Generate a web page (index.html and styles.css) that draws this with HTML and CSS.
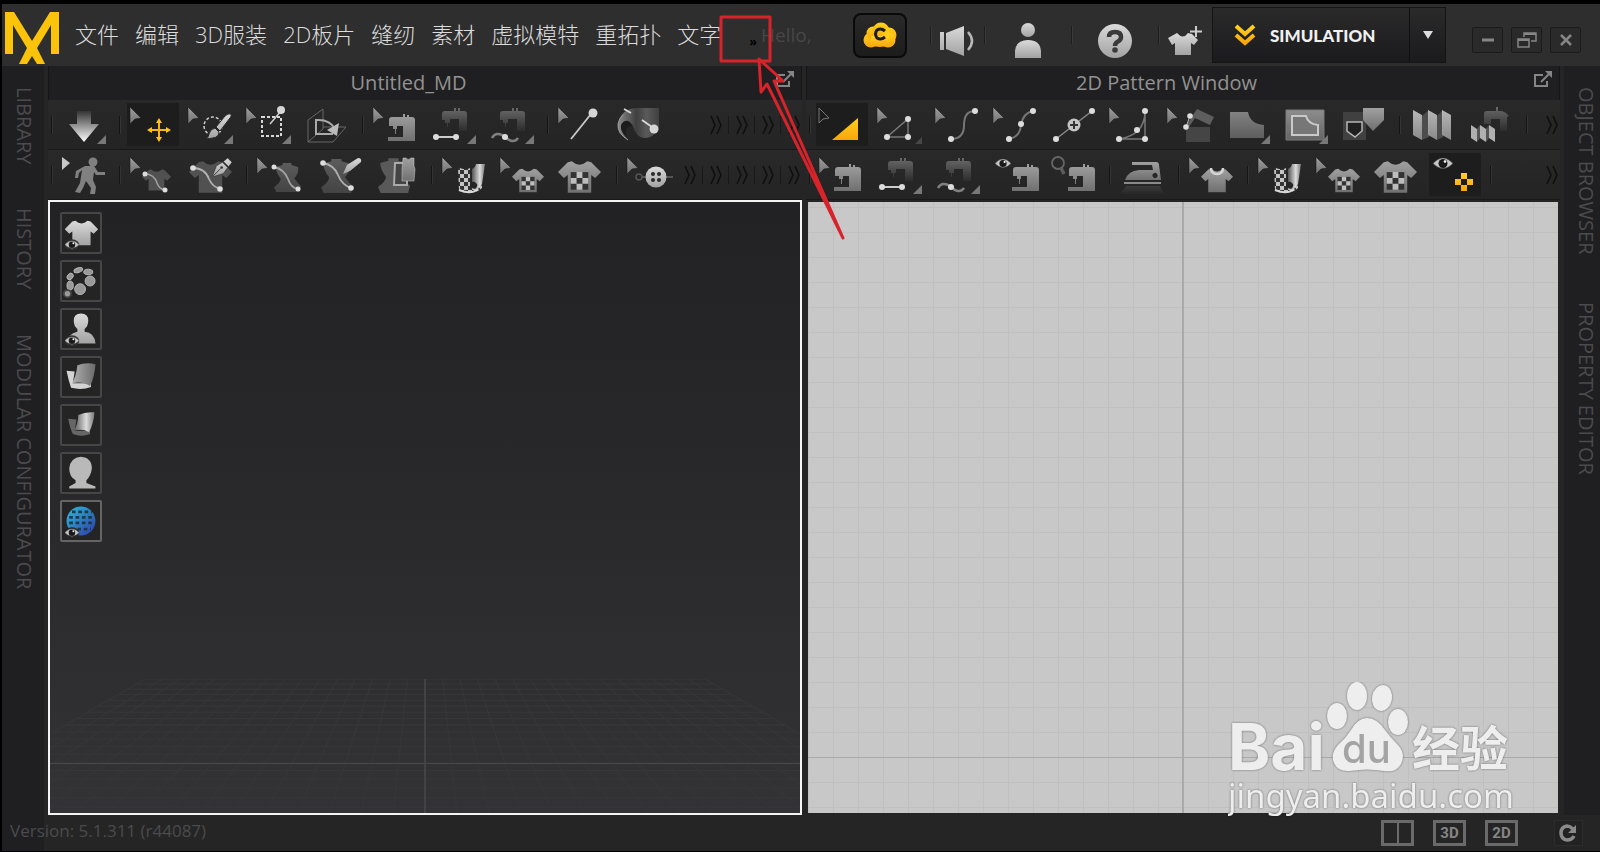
FILE: index.html
```html
<!DOCTYPE html>
<html lang="zh-CN">
<head>
  <meta charset="UTF-8" />
  <meta name="viewport" content="width=device-width, initial-scale=1" />
  <title>Untitled_MD</title>
  <link rel="stylesheet" href="styles.css">
</head>
<body>

<!-- shared icon shapes -->
<svg class="defs" aria-hidden="true">
  <defs>
    <linearGradient id="g-light" x1="0" y1="0" x2="0" y2="1"><stop offset="0" stop-color="#dadada"/><stop offset="1" stop-color="#a2a2a2"/></linearGradient>
    <linearGradient id="g-mid" x1="0" y1="0" x2="0" y2="1"><stop offset="0" stop-color="#a0a0a0"/><stop offset="1" stop-color="#707070"/></linearGradient>
    <linearGradient id="g-dark" x1="0" y1="0" x2="0" y2="1"><stop offset="0" stop-color="#5c5c5c"/><stop offset="1" stop-color="#424242"/></linearGradient>
    <linearGradient id="g-fade" x1="0" y1="0" x2="0" y2="1"><stop offset="0" stop-color="#6a6a6a"/><stop offset="1" stop-color="#2c2c2c"/></linearGradient>
    <linearGradient id="g-down" x1="0" y1="0" x2="0" y2="1"><stop offset="0" stop-color="#333"/><stop offset="1" stop-color="#fff"/></linearGradient>
    <linearGradient id="g-gold" x1="0" y1="0" x2="0" y2="1"><stop offset="0" stop-color="#ffd21c"/><stop offset="1" stop-color="#f9a50d"/></linearGradient>
    <linearGradient id="g-side" x1="0" y1="0" x2="1" y2="0"><stop offset="0" stop-color="#b0b0b0"/><stop offset="1" stop-color="#6a6a6a"/></linearGradient>
    <linearGradient id="g-fold" x1="0" y1="0" x2="1" y2="0"><stop offset="0" stop-color="#8c8c8c"/><stop offset=".45" stop-color="#3f3f3f"/><stop offset=".7" stop-color="#5a5a5a"/><stop offset="1" stop-color="#404040"/></linearGradient>
    <linearGradient id="g-roll" x1="0" y1="0" x2="1" y2="0"><stop offset="0" stop-color="#555"/><stop offset=".6" stop-color="#ddd"/><stop offset="1" stop-color="#777"/></linearGradient>
    <linearGradient id="g-globe" x1="0" y1="0" x2="1" y2="1"><stop offset="0" stop-color="#2bc0dc"/><stop offset="1" stop-color="#3038a8"/></linearGradient>
    <pattern id="checks" width="8" height="8" patternUnits="userSpaceOnUse"><path fill="#333" d="M0 0h8v8H0z"/><path fill="#c4c4c4" d="M0 0h4v4H0zM4 4h4v4H4z"/></pattern>
  </defs>
  <symbol id="cursor" viewBox="0 0 58 50"><path fill="url(#g-mid)" stroke="#171717" stroke-width=".5" d="M6 7l11 11-6 1-5 5z"/></symbol>
  <symbol id="corner" viewBox="0 0 58 50"><path fill="#787878" d="M51 35v9h-9z"/></symbol>
  <symbol id="machine" viewBox="0 0 27 27"><path d="M1 6q0-3 3-3h11V0h2v3h2V1h2v2h3q3 0 3 3v21H0v-4h15V12H9v3H8v5H7v-5H5v-3H1z"/></symbol>
  <symbol id="tee" viewBox="0 0 44 32"><path d="M14 0q8 7 16 0l4 1 10 10-6 6-4-3v18H10V14l-4 3-6-6L10 1z"/></symbol>
  <symbol id="dress" viewBox="0 0 28 30"><path d="M2 4l7-2V0h9v2l7 2q1 7-4 12 3 4 7 8l-2 8H3l-3-7q7-5 7-9Q2 10 2 4z"/></symbol>
  <symbol id="checktee" viewBox="0 0 44 32"><path fill="url(#g-mid)" d="M14 0q8 7 16 0l4 1 10 10-6 6-4-3v18H10V14l-4 3-6-6L10 1z"/><path fill="#333" d="M13 11h18v18H13z"/><path fill="#bdbdbd" d="M19 11h6v6h-6zM13 17h6v6h-6zM25 17h6v6h-6zM19 23h6v6h-6z"/></symbol>
  <symbol id="roll" viewBox="0 0 58 50"><path fill="url(#checks)" d="M22 17q7 4 12 1v19q8 5 12-3v4q-8 8-23 2z"/><path fill="url(#g-roll)" d="M36 32V19q3-1 4-5h9l-3 20q-2 6-7 5 4-4 1-6-2-2-4-1z"/><path fill="none" stroke="#d8d8d8" stroke-width="2" d="M23 40q12 5 19-1"/></symbol>
  <symbol id="eye" viewBox="0 0 20 12"><path fill="#c8c8c8" stroke="#333" stroke-width=".5" d="M0 6q10-11 20 0-10 10-20 0z"/><circle cx="10" cy="6" r="4.500" fill="#1a1a1a"/><circle cx="12" cy="4" r="1.300" fill="#fff"/></symbol>
  <symbol id="pen" viewBox="0 0 24 22"><path fill="url(#g-light)" stroke="#222" stroke-width=".6" d="M23 5l-5-5-5 4 6 6zM12 5l6 6-5 7-13 4 5-13z"/><path stroke="#333" d="M1 21l9-9"/><circle cx="11" cy="11" r="1.500" fill="#333"/></symbol>
  <symbol id="chev" viewBox="0 0 12 22"><path fill="none" stroke="#0f0f0f" stroke-width="1.600" d="M1 2l4 9-4 9M7 2l4 9-4 9"/></symbol>
  <symbol id="popout" viewBox="0 0 20 17"><path fill="none" stroke="#858585" stroke-width="2" d="M10 4H2v11h12v-5M8 11l8-8"/><path fill="#858585" d="M12 0h7v7z"/></symbol>
  <symbol id="segment" viewBox="0 0 58 50"><path fill="url(#g-fade)" d="M17 14q0-3 3-3h9V8h2v3h2V8h2v3h4q3 0 3 3v17h-8V19h-9v4h-2v4h-1v-4h-2v-3h-3z"/></symbol>
</svg>

<header class="topbar">
  <a href="#" class="logo" aria-label="Home">
    <svg width="56" height="54" viewBox="0 0 56 54"><path fill="#fcc30b" d="M0 43V1h9l18 29L45 1h9v42h-8V14L32 37l8 16h-8l-5-8-5 8h-8l8-16L8 14v29z"/></svg>
  </a>
  <nav class="menu">
    <a href="#">文件</a>
    <a href="#">编辑</a>
    <a href="#">3D服装</a>
    <a href="#">2D板片</a>
    <a href="#">缝纫</a>
    <a href="#">素材</a>
    <a href="#">虚拟模特</a>
    <a href="#">重拓扑</a>
    <a href="#">文字</a>
  </nav>
  <button class="more" aria-label="More menus">»</button>
  <span class="hello">Hello,</span>

  <div class="account">
    <button class="cloud" aria-label="Cloud">
      <svg width="34" height="26" viewBox="0 0 34 26"><g fill="url(#g-gold)"><circle cx="8" cy="18" r="7.500"/><circle cx="10" cy="11" r="6.500"/><circle cx="18" cy="9" r="8.500"/><circle cx="26" cy="13" r="7.500"/><circle cx="25" cy="18" r="7.500"/><path d="M8 14h18v9q-9 4-18 0z"/></g><path fill="none" stroke="#1d1d1d" stroke-width="3" d="M22 9q-4-3.500-8-1-3 4 0 8 4 2.500 8-1"/></svg>
    </button>
    <button class="acct narrow" aria-label="News">
      <svg width="36" height="32" viewBox="0 0 36 32"><path fill="url(#g-light)" d="M1 7h4v18H1zM7 8L25 1v30L7 24z"/><path fill="none" stroke="#b8b8b8" stroke-width="2.500" d="M29 7q8 9 0 18"/></svg>
    </button>
    <button class="acct" aria-label="User">
      <svg width="28" height="36" viewBox="0 0 28 36"><circle cx="14" cy="7" r="7" fill="url(#g-light)"/><path fill="url(#g-light)" d="M1 35V28q1-11 13-11t13 11v7z"/></svg>
    </button>
    <button class="acct" aria-label="Help">
      <svg width="34" height="34" viewBox="0 0 34 34"><circle cx="17" cy="17" r="17" fill="url(#g-light)"/><path fill="none" stroke="#3a3a3a" stroke-width="4.500" d="M11 13q0-5 6-5t6 5q0 3-3 4.500-3 1.500-3 4.500"/><circle cx="17" cy="26" r="2.800" fill="#3a3a3a"/></svg>
    </button>
    <button class="acct narrow" aria-label="Add garment">
      <svg width="34" height="32" viewBox="0 0 34 32"><path fill="url(#g-light)" d="M9 8q6 7 11 0l4 1 6 6-4 5-3-2v12H7V18l-3 2-4-7z"/><path stroke="#ccc" stroke-width="2" d="M28 1v11M22 6.500h12"/></svg>
    </button>
  </div>

  <div class="mode">
    <button class="mode-main">
      <svg width="22" height="22" viewBox="0 0 22 22"><path fill="none" stroke="url(#g-gold)" stroke-width="4" d="M2 2l9 8 9-8M2 11l9 8 9-8"/></svg>
      SIMULATION
    </button>
    <button class="mode-drop" aria-label="Choose mode">
      <svg width="10" height="8" viewBox="0 0 10 8"><path fill="#ddd" d="M0 0h10L5 8z"/></svg>
    </button>
  </div>

  <div class="winctl">
    <button aria-label="Minimize"><svg width="14" height="14" viewBox="0 0 14 14"><path stroke="#868686" stroke-width="3" d="M1 7h12"/></svg></button>
    <button aria-label="Restore"><svg width="20" height="16" viewBox="0 0 20 16"><path fill="none" stroke="#868686" stroke-width="1.500" d="M1 7h11v8H1zM7 5V1h12v8h-5"/><path stroke="#868686" stroke-width="2" d="M1 8h11M7 2h12"/></svg></button>
    <button aria-label="Close"><svg width="12" height="12" viewBox="0 0 12 12"><path stroke="#868686" stroke-width="2.500" d="M1 1l10 10M11 1L1 11"/></svg></button>
  </div>
</header>

<main class="workspace">
  <aside class="side left">
    <button>LIBRARY</button>
    <button>HISTORY</button>
    <button>MODULAR CONFIGURATOR</button>
  </aside>

  <section class="panel">
    <div class="panel-title">
      <h2>Untitled_MD</h2>
      <button aria-label="Undock 3D window"><svg width="20" height="17"><use href="#popout"/></svg></button>
    </div>

    <div class="toolbar">
      <i class="grip"></i>
      <button class="tool" aria-label="Simulate"><svg viewBox="0 0 58 50"><path fill="url(#g-down)" d="M22 11h14v13h8L29 42 14 24h8z"/><use href="#corner"/></svg></button>
      <i class="sep"></i>
      <button class="tool on" aria-label="Select/Move"><svg viewBox="0 0 58 50"><use href="#cursor"/><path stroke="#fbb50e" stroke-width="2" d="M35 20v20M25 30h20"/><path fill="#ffc51a" d="M35 18l3 5h-6zM35 42l3-5h-6zM23 30l5-3v6zM47 30l-5-3v6z"/></svg></button>
      <button class="tool" aria-label="Select brush"><svg viewBox="0 0 58 50"><use href="#cursor"/><circle cx="31" cy="26" r="9" fill="none" stroke="#ccc" stroke-width="1.500" stroke-dasharray="3 2"/><path fill="url(#g-light)" stroke="#262626" d="M49 14q-3-1-6 2l-9 11 4 4 10-13q2-2 1-4zM33 28l4 4q0 5-6 6-4 1-7 0 3-1 3-4 1-5 6-6z"/><use href="#corner"/></svg></button>
      <button class="tool" aria-label="Box select"><svg viewBox="0 0 58 50"><use href="#cursor"/><path fill="none" stroke="#d8d8d8" stroke-width="2" stroke-dasharray="3 2" d="M22 17h19v19H22z"/><path stroke="#ccc" stroke-width="1.500" d="M30 24l11-13"/><circle cx="41" cy="10" r="4" fill="#d6d6d6"/><use href="#corner"/></svg></button>
      <button class="tool" aria-label="Rotate view"><svg viewBox="0 0 58 50"><path fill="none" stroke="#666" d="M10 42V20L25 9v20L10 42h25l13-15H25"/><path fill="none" stroke="#aaa" stroke-width="2" d="M18 19v15h17M18 20q14-1 19 9"/><path fill="#bbb" d="M41 23l-2 13-10-6z"/></svg></button>
      <i class="sep"></i>
      <button class="tool" aria-label="Edit sewing"><svg viewBox="0 0 58 50"><use href="#cursor"/><use href="#machine" x="21" y="14" width="27" height="27" fill="url(#g-mid)"/></svg></button>
      <button class="tool" aria-label="Segment sewing"><svg viewBox="0 0 58 50"><use href="#segment"/><path stroke="#ccc" stroke-width="2" d="M11 37h20"/><circle cx="11" cy="37" r="3" fill="#ddd"/><circle cx="31" cy="37" r="3" fill="#ddd"/><use href="#corner"/></svg></button>
      <button class="tool" aria-label="Free sewing"><svg viewBox="0 0 58 50"><use href="#segment"/><path fill="none" stroke="#808080" stroke-width="2.500" d="M9 38q4-7 12-2 9 9 14 2"/><circle cx="22" cy="37" r="3" fill="#ddd"/><use href="#corner"/></svg></button>
      <i class="sep"></i>
      <button class="tool" aria-label="Pin"><svg viewBox="0 0 58 50"><use href="#cursor"/><path stroke="#ccc" stroke-width="1.800" d="M19 39l20-25"/><circle cx="41" cy="13" r="4.500" fill="#d6d6d6"/></svg></button>
      <button class="tool" aria-label="Pin fold"><svg viewBox="0 0 58 50"><path fill="url(#g-fold)" d="M18 40Q6 33 8 24q3-15 18-16h23v20q-5 10-15 10-8-1-11-12-3-6-9-4-4 8 4 18z"/><path fill="#1c1c1c" d="M22 26q-2-6-7-5-5 2-4 8 2 6 6 9-3-7 0-10 2-2 5-2z"/><path fill="none" stroke="#999" d="M18 40Q7 33 8 24q1-6 5-9"/><path stroke="#d8d8d8" stroke-width="1.800" d="M14 9l7 4M32 20l10 7"/><circle cx="44" cy="29" r="4.500" fill="#d6d6d6"/></svg></button>
      <div class="overflow">
        <button aria-label="More tools"><svg><use href="#chev"/></svg></button>
        <button aria-label="More tools"><svg><use href="#chev"/></svg></button>
        <button aria-label="More tools"><svg><use href="#chev"/></svg></button>
        <button aria-label="More tools"><svg><use href="#chev"/></svg></button>
      </div>
    </div>

    <div class="toolbar">
      <i class="grip"></i>
      <button class="tool" aria-label="Play motion"><svg viewBox="0 0 58 50"><path fill="#c8c8c8" d="M7 7l8 6-8 7z"/><circle cx="38" cy="12" r="4.500" fill="#808080"/><path fill="#808080" d="M30 16h9l4 6 7 0v3h-9l-2-3-1 8 3 7-1 7h-5l1-6-5-7-3 7-3 5-5-1 5-9 2-13-3 3-1 5h-3l1-7z"/></svg></button>
      <i class="sep"></i>
      <button class="tool" aria-label="Edit 3D line"><svg viewBox="0 0 58 50"><use href="#tee" x="18" y="17" width="29" height="26" fill="#515151"/><use href="#cursor"/><path fill="none" stroke="#a2a2a2" stroke-width="1.500" d="M21 24q9 0 12 9 2 6 8 7"/><circle cx="21" cy="24" r="2.500" fill="#ddd"/><circle cx="41" cy="40" r="2.500" fill="#ddd"/></svg></button>
      <button class="tool" aria-label="Draw 3D line"><svg viewBox="0 0 58 50"><use href="#tee" x="7" y="11" width="43" height="32" fill="#515151"/><path fill="none" stroke="#b2b2b2" stroke-width="1.800" d="M11 18q12 0 16 11 4 9 11 9"/><circle cx="11" cy="18" r="2.800" fill="#ddd"/><circle cx="38" cy="39" r="2.800" fill="#ddd"/><use href="#pen" x="30" y="8" width="21" height="19"/></svg></button>
      <i class="sep"></i>
      <button class="tool" aria-label="Edit avatar line"><svg viewBox="0 0 58 50"><use href="#dress" x="23" y="13" width="27" height="29" fill="url(#g-dark)"/><use href="#cursor"/><path fill="none" stroke="#a2a2a2" stroke-width="1.800" d="M23 17q10 2 14 12 3 9 10 10"/><circle cx="23" cy="17" r="2.500" fill="#ddd"/><circle cx="47" cy="39" r="2.500" fill="#ddd"/></svg></button>
      <button class="tool" aria-label="Draw avatar line"><svg viewBox="0 0 58 50"><use href="#dress" x="12" y="9" width="32" height="34" fill="url(#g-dark)"/><path fill="none" stroke="#b2b2b2" stroke-width="1.800" d="M14 13q11 2 15 12 4 10 13 13"/><circle cx="14" cy="13" r="2.800" fill="#ddd"/><circle cx="42" cy="38" r="2.800" fill="#ddd"/><path fill="url(#g-light)" d="M34 24l4-9 11-7q4 0 3 4L41 21z"/></svg></button>
      <button class="tool" aria-label="Flatten"><svg viewBox="0 0 58 50"><use href="#dress" x="11" y="8" width="32" height="35" fill="#595959"/><path fill="#444" stroke="#aaa" stroke-width="2" d="M28 13h12v22H27z"/><path fill="url(#g-mid)" stroke="#ccc" stroke-width=".5" d="M36 8h3q2 3 5 0h3v8l1 3-1 12H35V19z"/></svg></button>
      <i class="sep"></i>
      <button class="tool" aria-label="Edit texture"><svg viewBox="0 0 58 50"><use href="#cursor"/><use href="#roll"/></svg></button>
      <button class="tool" aria-label="Edit print"><svg viewBox="0 0 58 50"><use href="#cursor"/><use href="#checktee" x="18" y="18" width="32" height="25"/></svg></button>
      <button class="tool" aria-label="Print"><svg viewBox="0 0 58 50"><use href="#checktee" x="6" y="11" width="43" height="32"/></svg></button>
      <i class="sep"></i>
      <button class="tool" aria-label="Button"><svg viewBox="0 0 58 50"><use href="#cursor"/><path stroke="#555" stroke-width="2" d="M20 27h32"/><circle cx="18" cy="27" r="3" fill="none" stroke="#555" stroke-width="1.500"/><circle cx="35" cy="27" r="10.500" fill="url(#g-light)"/><g fill="#2a2a2a"><circle cx="32" cy="24" r="2"/><circle cx="38" cy="24" r="2"/><circle cx="32" cy="30" r="2"/><circle cx="38" cy="30" r="2"/></g></svg></button>
      <div class="overflow">
        <button aria-label="More tools"><svg><use href="#chev"/></svg></button>
        <button aria-label="More tools"><svg><use href="#chev"/></svg></button>
        <button aria-label="More tools"><svg><use href="#chev"/></svg></button>
        <button aria-label="More tools"><svg><use href="#chev"/></svg></button>
        <button aria-label="More tools"><svg><use href="#chev"/></svg></button>
      </div>
    </div>

    <div class="view3d">
      <svg class="floor" viewBox="0 0 750 134" preserveAspectRatio="none" aria-hidden="true"><g id="floorLines"></g><path stroke="#424244" stroke-width="2" d="M375 0v134"/><path stroke="#48484a" d="M0 84.500h750"/></svg>
      <div class="display">
        <button aria-label="Show garment"><svg viewBox="0 0 42 42"><use href="#tee" x="3" y="5" width="37" height="32" fill="url(#g-light)"/><ellipse cx="11" cy="34" rx="8" ry="6" fill="#333"/><use href="#eye" x="3" y="29" width="16" height="10"/></svg></button>
        <button aria-label="Show trims"><svg viewBox="0 0 42 42"><g fill="#999" stroke="#bbb"><ellipse cx="18" cy="9" rx="5" ry="2.500" transform="rotate(-20 18 9)"/><ellipse cx="29" cy="11" rx="5" ry="3"/><ellipse cx="9" cy="16" rx="4" ry="3" transform="rotate(-50 9 16)"/><circle cx="31" cy="21" r="5.500"/><ellipse cx="9" cy="26" rx="3.500" ry="5"/><circle cx="20" cy="30" r="6"/></g><circle cx="6" cy="35" r="5" fill="#444"/><circle cx="6" cy="35" r="3" fill="#999"/></svg></button>
        <button aria-label="Show avatar"><svg viewBox="0 0 42 42"><path fill="url(#g-light)" d="M21 4q8 0 8 8 0 6-4 9v3q11 1 12 13H6q0-11 11-13v-3q-4-3-4-9 0-8 8-8z"/><ellipse cx="11" cy="34" rx="8" ry="6" fill="#333"/><use href="#eye" x="3" y="29" width="16" height="10"/></svg></button>
        <button aria-label="Surface front"><svg viewBox="0 0 42 42"><path fill="#d4d4d4" d="M5 14l9 1-2 13 20 0v4q-10 4-22 1-3-9-5-19z"/><path fill="url(#g-side)" d="M17 8q10-4 20-1-1 14-6 24-9-6-20-3 5-9 6-20z"/></svg></button>
        <button aria-label="Surface back"><svg viewBox="0 0 42 42"><path fill="#666" d="M7 14l9 1-2 12 17 1v3q-9 4-19 0-3-6-5-16z"/><path fill="url(#g-roll)" d="M18 10q8-4 18-3-1 12-6 22-7-4-17-2 5-7 5-17z"/></svg></button>
        <button aria-label="Avatar style"><svg viewBox="0 0 42 42"><path fill="#b9b9b9" d="M21 3q12 1 12 13-1 8-6 13v3l10 4v2H8v-2l7-4v-3Q8 25 8 16 9 4 21 3z"/></svg></button>
        <button class="lit" aria-label="Show environment"><svg viewBox="0 0 42 42"><circle cx="21" cy="21" r="16" fill="url(#g-globe)"/><path fill="none" stroke="#1e3848" stroke-width="3" stroke-dasharray="4 3" d="M11 11h22M8 17h27M8 23h27M10 30h22"/><ellipse cx="11" cy="34" rx="8" ry="6" fill="#282829"/><use href="#eye" x="3" y="29" width="16" height="10"/></svg></button>
      </div>
    </div>
  </section>

  <section class="panel">
    <div class="panel-title">
      <h2>2D Pattern Window</h2>
      <button aria-label="Undock 2D window"><svg width="20" height="17"><use href="#popout"/></svg></button>
    </div>

    <div class="toolbar">
      <i class="grip"></i>
      <button class="tool on" aria-label="Transform pattern"><svg viewBox="0 0 58 50"><path fill="none" stroke="#777" d="M6 8l10 10-6 1-4 4z"/><path fill="url(#g-gold)" d="M19 40l26-22v22z"/></svg></button>
      <button class="tool" aria-label="Edit pattern"><svg viewBox="0 0 58 50"><use href="#cursor"/><path fill="none" stroke="#777" stroke-width="1.500" d="M16 37h21V19z"/><g fill="#ddd"><circle cx="16" cy="37" r="3"/><circle cx="37" cy="37" r="3"/><circle cx="37" cy="19" r="3"/></g><path fill="#484848" d="M51 37v7h-7z"/></svg></button>
      <button class="tool" aria-label="Edit curve point"><svg viewBox="0 0 58 50"><use href="#cursor"/><path fill="none" stroke="#777" stroke-width="2" d="M22 39q13 0 13-14t11-14"/><g fill="#ddd"><circle cx="22" cy="39" r="3"/><circle cx="46" cy="11" r="3"/></g></svg></button>
      <button class="tool" aria-label="Edit curvature"><svg viewBox="0 0 58 50"><use href="#cursor"/><path fill="none" stroke="#777" stroke-width="2" d="M22 39q11-2 12-14 2-12 12-14"/><g fill="#ddd"><circle cx="22" cy="39" r="3"/><circle cx="34" cy="24" r="3"/><circle cx="46" cy="11" r="3"/></g></svg></button>
      <button class="tool" aria-label="Add point"><svg viewBox="0 0 58 50"><path stroke="#888" stroke-width="1.500" d="M11 39l36-28"/><g fill="#ddd"><circle cx="11" cy="39" r="3"/><circle cx="47" cy="11" r="3"/></g><circle cx="29" cy="25" r="6.500" fill="#c4c4c4"/><path stroke="#333" stroke-width="2" d="M29 21v8M25 25h8"/></svg></button>
      <button class="tool" aria-label="Edit notch"><svg viewBox="0 0 58 50"><use href="#cursor"/><path fill="none" stroke="#777" stroke-width="1.500" d="M42 11v28H16q26-4 26-28z"/><g fill="#ddd"><circle cx="42" cy="11" r="3"/><circle cx="16" cy="39" r="3"/><circle cx="42" cy="39" r="3"/><circle cx="34" cy="30" r="3"/></g></svg></button>
      <button class="tool" aria-label="Fold pattern"><svg viewBox="0 0 58 50"><use href="#cursor"/><path fill="#454545" d="M25 27h24v15H25z"/><path fill="#5e5e5e" d="M32 15l4-6 17 8-4 8-15-7-6 9-3-1z"/><path stroke="#bbb" d="M29 16l-4 11"/><circle cx="29" cy="16" r="2.800" fill="#ddd"/><circle cx="25" cy="27" r="2.800" fill="#ddd"/></svg></button>
      <button class="tool" aria-label="Polygon"><svg viewBox="0 0 58 50"><path fill="url(#g-mid)" opacity=".75" d="M11 12h18q2 12 16 13v13H11z"/><use href="#corner"/></svg></button>
      <button class="tool" aria-label="Internal polygon"><svg viewBox="0 0 58 50"><path fill="url(#g-mid)" opacity=".85" stroke="#888" d="M9 10h38v30H9z"/><path fill="#777" stroke="#c9c9c9" stroke-width="2" d="M15 16h14q2 8 12 9v10H15z"/><use href="#corner"/></svg></button>
      <button class="tool" aria-label="Trace"><svg viewBox="0 0 58 50"><path fill="#404040" d="M8 12h23v28H8z"/><path fill="#1f1f1f" stroke="#b5b5b5" stroke-width="1.500" d="M12 22h15v9l-7 6-8-6z"/><path fill="url(#g-mid)" d="M28 8h21v12L38 31 28 20z"/></svg></button>
      <i class="sep"></i>
      <button class="tool" aria-label="Pleats"><svg viewBox="0 0 58 50"><path fill="#4d4d4d" d="M18 16l7-6v27l-7 3zM33 16l6-6v27l-6 3z"/><path fill="url(#g-light)" opacity=".8" d="M9 10l9 5v25l-9-5zM24 10l9 5v25l-9-5zM38 10l9 5v25l-9-5z"/></svg></button>
      <button class="tool" aria-label="Pleat sewing"><svg viewBox="0 0 58 50"><path fill="url(#g-fade)" d="M22 14q0-3 3-3h9V7h2v4h4l4 2 3 3-2 1v14h-7V19h-9v5h-7z"/><path fill="#b0b0b0" d="M9 25l6 4v13l-6-4zM18 25l6 4v13l-6-4zM27 25l6 4v13l-6-4z"/><path fill="#555" d="M15 29l3-4v13l-3 4zM24 29l3-4v13l-3 4z"/></svg></button>
      <i class="sep"></i>
      <div class="overflow"><button aria-label="More tools"><svg><use href="#chev"/></svg></button></div>
    </div>

    <div class="toolbar">
      <i class="grip"></i>
      <button class="tool" aria-label="Edit sewing"><svg viewBox="0 0 58 50"><use href="#cursor"/><use href="#machine" x="21" y="14" width="27" height="27" fill="url(#g-mid)"/></svg></button>
      <button class="tool" aria-label="Segment sewing"><svg viewBox="0 0 58 50"><use href="#segment"/><path stroke="#ccc" stroke-width="2" d="M11 37h20"/><circle cx="11" cy="37" r="3" fill="#ddd"/><circle cx="31" cy="37" r="3" fill="#ddd"/><use href="#corner"/></svg></button>
      <button class="tool" aria-label="Free sewing"><svg viewBox="0 0 58 50"><use href="#segment"/><path fill="none" stroke="#808080" stroke-width="2.500" d="M9 38q4-7 12-2 9 9 14 2"/><circle cx="22" cy="37" r="3" fill="#ddd"/><use href="#corner"/></svg></button>
      <button class="tool" aria-label="Show sewing"><svg viewBox="0 0 58 50"><use href="#eye" x="8" y="8" width="16" height="11"/><use href="#machine" x="25" y="14" width="27" height="27" fill="url(#g-mid)"/></svg></button>
      <button class="tool" aria-label="Check sewing"><svg viewBox="0 0 58 50"><circle cx="13" cy="13" r="6" fill="none" stroke="#666" stroke-width="1.800"/><path stroke="#5c5c5c" stroke-width="3.500" d="M16 18l3 6"/><use href="#machine" x="23" y="14" width="27" height="27" fill="url(#g-mid)"/></svg></button>
      <i class="sep"></i>
      <button class="tool" aria-label="Steam"><svg viewBox="0 0 58 50"><path fill="url(#g-fade)" opacity=".3" d="M12 36h34l4 8H6z"/><path fill="url(#g-mid)" fill-rule="evenodd" d="M18 12h24q3 0 3 3l2 15H11q3-9 14-10h14l-1-5H18zM43 24a2 2 0 1 0-4 3 2 2 0 0 0 4-3z"/><path fill="#8a8a8a" d="M10 32h37v2H10z"/></svg></button>
      <i class="sep"></i>
      <button class="tool" aria-label="Collar"><svg viewBox="0 0 58 50"><use href="#cursor"/><use href="#tee" x="18" y="18" width="32" height="25" fill="url(#g-mid)"/><path fill="none" stroke="#d5d5d5" stroke-width="2.500" d="M28 18q0 6 6 6t6-6"/></svg></button>
      <i class="sep"></i>
      <button class="tool" aria-label="Edit texture"><svg viewBox="0 0 58 50"><use href="#cursor"/><use href="#roll"/></svg></button>
      <button class="tool" aria-label="Edit print"><svg viewBox="0 0 58 50"><use href="#cursor"/><use href="#checktee" x="18" y="18" width="32" height="25"/></svg></button>
      <button class="tool" aria-label="Print"><svg viewBox="0 0 58 50"><use href="#checktee" x="6" y="11" width="43" height="32"/></svg></button>
      <button class="tool on" aria-label="Show print"><svg viewBox="0 0 58 50"><use href="#eye" x="7" y="7" width="20" height="13"/><path fill="url(#g-gold)" d="M35 23h6v6h-6zM29 29h6v6h-6zM41 29h6v6h-6zM35 35h6v6h-6z"/></svg></button>
      <i class="sep"></i>
      <div class="overflow"><button aria-label="More tools"><svg><use href="#chev"/></svg></button></div>
    </div>

    <div class="view2d"></div>
  </section>

  <aside class="side right">
    <button>OBJECT BROWSER</button>
    <button>PROPERTY EDITOR</button>
  </aside>
</main>

<footer class="status">
  <span>Version: 5.1.311 (r44087)</span>
  <div class="layout">
    <button class="split" aria-label="Split view"><i></i></button>
    <button>3D</button>
    <button>2D</button>
    <button class="reset" aria-label="Reset layout"><svg width="18" height="18" viewBox="0 0 18 18"><path fill="none" stroke="#8a8a8a" stroke-width="3.500" d="M14 5q-3-3-6-3-6 1-6 7t6 7q5 0 7-4"/><path fill="#8a8a8a" d="M17 1v8H9z"/></svg></button>
  </div>
</footer>

<svg class="watermark" width="290" height="140" viewBox="0 0 290 140">
  <g class="mark">
    <text class="bai" x="0" y="88">Bai</text>
    <g>
      <ellipse cx="109" cy="34" rx="10" ry="13"/>
      <ellipse cx="129" cy="14" rx="10" ry="14"/>
      <ellipse cx="154" cy="16" rx="10" ry="13" transform="rotate(10 154 16)"/>
      <ellipse cx="170" cy="40" rx="10" ry="13"/>
      <path d="M139 36q10 0 18 12 5 7 13 15 8 9 3 19-5 9-17 7-17-3-34 0-12 1-16-8-4-9 4-18 8-7 13-15 7-12 16-12z"/>
    </g>
    <text class="du" x="114" y="81">du</text>
    <text class="jy" x="184" y="84">经验</text>
    <text class="url" x="0" y="126">jingyan.baidu.com</text>
  </g>
</svg>

<svg class="callout" width="130" height="230" viewBox="0 0 130 230" aria-hidden="true">
  <path d="M6 7h49v44H6zM44 49l24 22h-9l69 157L52 74l-6 8z"/>
</svg>

<script src="script.js"></script>
</body>
</html>
```

FILE: styles.css
```css
:root {
  --bar: #2e2e2e;
  --base: #252525;
  --dark: #1f1f21;
  --label: #4b4b4d;
}
* {
  box-sizing: border-box;
}
body {
  margin: 0;
  min-height: 100vh;
  display: flex;
  flex-direction: column;
  position: relative;
  background: var(--base);
  border: solid #000;
  border-width: 4px 0 1px 2px;
  font-family: "Open Sans", "Noto Sans CJK SC", sans-serif;
  overflow: hidden;
}
button {
  padding: 0;
  border: 0;
  background: none;
  color: inherit;
  font: inherit;
  cursor: pointer;
}
svg {
  display: block;
}
.defs {
  position: absolute;
  width: 0;
  height: 0;
}

/* top bar */
.topbar {
  height: 62px;
  flex: none;
  display: flex;
  align-items: center;
  background: var(--bar);
}
.logo {
  margin: 6px 14px 0 3px;
}
.menu {
  display: flex;
  gap: 16px;
  margin-bottom: 2px;
}
.menu a {
  color: #dcdcdc;
  font-size: 22px;
  font-weight: 300;
  line-height: 30px;
  text-decoration: none;
  white-space: nowrap;
}
.more {
  margin: 12px 0 0 auto;
  color: #000;
  font-size: 12px;
  font-weight: 700;
}
.hello {
  width: 74px;
  margin-left: 4px;
  color: #474747;
  font-size: 19px;
}
.account {
  display: flex;
  align-items: center;
}
.account button {
  display: flex;
  align-items: center;
  justify-content: center;
}
.cloud {
  width: 54px;
  height: 45px;
  margin: 0 23px 0 18px;
  border: 2px solid #0a0a0a;
  border-radius: 8px;
  background: linear-gradient(#2a2a2a, #1c1c1c);
}
.account .acct {
  width: 87px;
  height: 62px;
  padding-top: 12px;
  background: linear-gradient(90deg, #1e1e1e 1px, #393939 1px, #393939 2px, transparent 2px) 0 22px / 100% 18px no-repeat;
}
.account .narrow {
  width: 54px;
}
.mode {
  display: flex;
  width: 234px;
  height: 56px;
  border: 1px solid #141414;
  background: linear-gradient(#2a2a2b, #1b1b1d);
}
.mode-main {
  flex: 1;
  display: flex;
  align-items: center;
  gap: 14px;
  padding-left: 21px;
  color: #f0f0f0;
  font-family: Lato, sans-serif;
  font-size: 17px;
  font-weight: 900;
}
.mode-drop {
  width: 36px;
  display: flex;
  align-items: center;
  justify-content: center;
  border-left: 1px solid #101010;
}
.winctl {
  display: flex;
  gap: 8px;
  margin: 10px 19px 0 26px;
}
.winctl button {
  width: 31px;
  height: 26px;
  display: flex;
  align-items: center;
  justify-content: center;
  border: 1px solid #1b1b1b;
  border-radius: 2px;
  background: #2a2a2a;
}

/* workspace */
.workspace {
  flex: 1;
  display: grid;
  grid-template-columns: 42px minmax(0, 1fr) minmax(0, 1fr) 36px;
  gap: 4px;
}
.side {
  display: flex;
  flex-direction: column;
  align-items: center;
  background: var(--dark);
  color: var(--label);
  font-size: 20px;
  line-height: 28px;
}
.side button {
  writing-mode: vertical-rl;
}
.left {
  gap: 44px;
  padding: 21px 0 0 2px;
}
.right {
  gap: 48px;
  padding: 21px 0 0 8px;
}
.panel {
  display: flex;
  flex-direction: column;
}
.panel-title {
  height: 34px;
  display: flex;
  align-items: center;
  background: var(--dark);
  border: solid #151515;
  border-width: 0 1px;
  padding-right: 6px;
}
.panel-title h2 {
  flex: 1;
  margin: 0;
  padding-right: 7px;
  text-align: center;
  color: #929292;
  font-size: 20px;
  font-weight: 400;
  line-height: 34px;
}
.panel-title button {
  margin-bottom: 8px;
}
.toolbar {
  height: 50px;
  display: flex;
  overflow: hidden;
  background: linear-gradient(#292929, #242424);
  border-bottom: 1px solid #181818;
}
.grip,
.sep {
  flex: none;
  width: 11px;
  background: linear-gradient(90deg, #151515 1px, #343434 1px) 6px 16px / 2px 18px no-repeat;
}
.grip {
  width: 7px;
  background-position: 3px 16px;
}
.tool {
  flex: none;
  width: 58px;
}
.tool svg {
  width: 58px;
  height: 50px;
}
.tool.on {
  background: linear-gradient(#1d1d1d, #1d1d1d) center 3px / 52px 43px no-repeat;
}
.overflow {
  margin-left: auto;
  display: flex;
}
.overflow button {
  flex: none;
  width: 26px;
  padding-left: 4px;
  background: linear-gradient(#191919, #191919) 22px 16px / 1px 18px no-repeat;
}
.overflow button:last-child {
  width: 18px;
}
.overflow svg {
  width: 12px;
  height: 22px;
}
.view3d {
  flex: 1;
  position: relative;
  padding: 10px;
  border: 2px solid #f4f4f4;
  background: linear-gradient(#222224, #29292b 50%, #333335);
}
.floor {
  position: absolute;
  left: 0;
  bottom: 0;
  width: 100%;
  height: 134px;
}
.floor line {
  stroke: #373739;
  stroke-width: 1;
}
.display {
  display: flex;
  flex-direction: column;
  align-items: flex-start;
  gap: 6px;
}
.display button {
  width: 42px;
  height: 42px;
  border: 2px solid #464646;
  border-radius: 2px;
  background: #242425;
}
.display .lit {
  border-color: #646464;
}
.display svg {
  width: 38px;
  height: 38px;
}
.view2d {
  flex: 1;
  margin: 2px;
  background:
    linear-gradient(#a9a9a9, #a9a9a9) center / 2px 100% no-repeat,
    linear-gradient(#a9a9a9, #a9a9a9) 0 555px / 100% 1px no-repeat,
    linear-gradient(90deg, #c0c0c0 1px, transparent 1px) 0 0 / 25px 25px,
    linear-gradient(#c0c0c0 1px, transparent 1px) 0 5px / 25px 25px,
    #c8c8c8;
}

/* status bar */
.status {
  height: 36px;
  flex: none;
  display: flex;
  align-items: center;
  justify-content: space-between;
  padding: 0 17px 0 8px;
  color: var(--label);
  font-size: 17px;
  line-height: 24px;
  background: linear-gradient(90deg, var(--dark) 42px, var(--base) 42px);
}
.status span {
  padding-bottom: 4px;
}
.layout {
  display: flex;
  gap: 19px;
}
.layout button {
  width: 33px;
  height: 26px;
  border: 3px solid #6a6a6a;
  color: #858585;
  font-family: Roboto, sans-serif;
  font-size: 15px;
  font-weight: 700;
  line-height: 20px;
}
.layout .split i {
  display: block;
  width: 2px;
  height: 20px;
  margin: auto;
  background: #6a6a6a;
}
.layout .reset {
  width: 29px;
  margin-left: 17px;
  padding-left: 4px;
  border: 1px solid #2c2c2c;
  background: #222;
}

/* overlays */
.watermark {
  position: absolute;
  right: 82px;
  bottom: 29px;
}
.mark {
  fill: #eee;
  filter: drop-shadow(0 0 1px rgba(0, 0, 0, 0.45));
}
.bai {
  font-family: Inter, sans-serif;
  font-size: 64px;
  font-weight: 700;
}
.du {
  fill: #a4a4a4;
  font-family: Inter, sans-serif;
  font-size: 40px;
  font-weight: 500;
}
.jy {
  font-family: "Noto Sans CJK SC", sans-serif;
  font-size: 48px;
  font-weight: 700;
}
.url {
  font-family: "Noto Sans", sans-serif;
  font-size: 33px;
}
.callout {
  position: absolute;
  left: 713px;
  top: 6px;
  pointer-events: none;
}
.callout path {
  fill: none;
  stroke: #d8232a;
  stroke-width: 3;
  stroke-linejoin: round;
}
```

FILE: script.js
```js
// floor grid of the 3D view, in perspective from one vanishing point
const floor = document.getElementById("floorLines");
const vanishY = -162;

function addLine(x1, y1, x2, y2) {
  const line = document.createElementNS("http://www.w3.org/2000/svg", "line");
  line.setAttribute("x1", x1);
  line.setAttribute("y1", y1);
  line.setAttribute("x2", x2);
  line.setAttribute("y2", y2);
  floor.appendChild(line);
}

for (let i = -16; i <= 16; i++) {
  const top = i * 17.5;
  const bottom = top * (134 - vanishY) / -vanishY;
  addLine(375 + top, 0, 375 + bottom, 134);
}

for (let y = 0, step = 5; y < 134; y += step, step *= 1.04) {
  const half = 280 * (y - vanishY) / -vanishY;
  addLine(375 - half, y, 375 + half, y);
}
```
